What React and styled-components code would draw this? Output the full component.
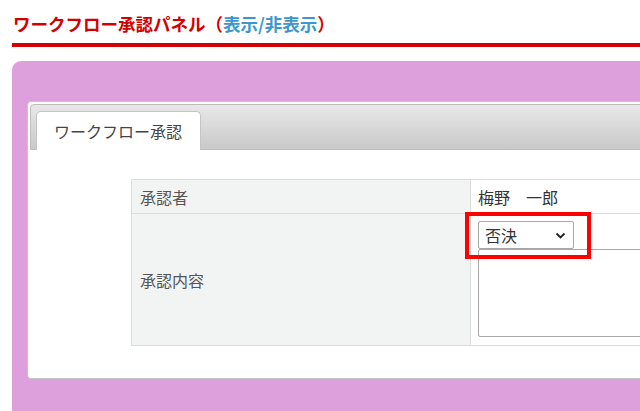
import styled, { createGlobalStyle } from "styled-components";

const GlobalStyle = createGlobalStyle`
  html, body {
    margin: 0;
    padding: 0;
    background: #fff;
    overflow: hidden;
    font-family: "Noto Sans CJK JP", "Noto Sans", sans-serif;
  }
`;

const Page = styled.div`
  width: 760px;
  height: 411px;
  overflow: hidden;
`;

const Header = styled.h2`
  margin: 0 0 0 12px;
  padding: 11px 0 0 1px;
  height: 32px;
  font-size: 17.5px;
  font-weight: bold;
  line-height: 26px;
  color: #d40000;
  border-bottom: 4px solid #d40000;
  box-sizing: content-box;

  span {
    color: #3d97cc;
  }
`;

const Plum = styled.div`
  margin: 14px 0 0 12px;
  padding: 40px 0 33px 15px;
  background: #dda0dd;
  border-top-left-radius: 9px;
`;

const Panel = styled.div`
  background: #fff;
  border: 1px solid #c5c5c5;
  border-radius: 4px;
  padding: 2px;
  padding-bottom: 32px;
`;

const TabBar = styled.div`
  display: flex;
  align-items: flex-end;
  height: 38px;
  padding: 6px 0 0 5px;
  background: linear-gradient(#e8e8e8, #c9c9c9);
  border: 1px solid #bdbdbd;
  border-radius: 4px 4px 0 0;
`;

const Tab = styled.div`
  width: 146px;
  height: 38px;
  margin-bottom: -1px;
  padding-left: 17px;
  background: #fff;
  border: 1px solid #c5c5c5;
  border-bottom: none;
  border-radius: 5px 5px 0 0;
  font-size: 16px;
  line-height: 38px;
  color: #444;
`;

const Table = styled.table`
  width: 840px;
  margin: 29px 0 0 101px;
  table-layout: fixed;
  border-collapse: collapse;
  font-size: 16px;
  color: #444;
`;

const LabelCol = styled.col`
  width: 339px;
`;

const Label = styled.th`
  height: ${({ $h }) => $h}px;
  padding: 0 8px;
  background: #f2f3f3;
  border: 1px solid #dcdcdc;
  font-weight: normal;
  text-align: left;
  color: #555;
`;

const Value = styled.td`
  padding: 0 7px;
  border: 1px solid #dcdcdc;
  vertical-align: ${({ $top }) => ($top ? "top" : "middle")};
  color: #333;
`;

const Stack = styled.div`
  display: flex;
  flex-direction: column;
  padding-top: 7px;
`;

const SelectWrap = styled.div`
  position: relative;
  width: 96px;
`;

const Select = styled.div`
  display: flex;
  align-items: center;
  justify-content: space-between;
  height: 26px;
  padding: 0 5px 0 6px;
  border: 1px solid #a8a8a8;
  border-radius: 2px;
  background: #fff;
  font-size: 16px;
  color: #333;

  svg {
    width: 15px;
    height: 15px;
  }
`;

const Highlight = styled.div`
  position: absolute;
  left: -13px;
  top: -9px;
  width: 118px;
  height: 39px;
  border: 4px solid #ff0000;
  pointer-events: none;
`;

const TextArea = styled.div`
  width: 480px;
  height: 86px;
  border: 1px solid #a8a8a8;
  border-radius: 2px;
`;

export default function App() {
  return (
    <Page>
      <GlobalStyle />
      <Header>
        ワークフロー承認パネル（<span>表示/非表示</span>）
      </Header>
      <Plum>
        <Panel>
          <TabBar>
            <Tab>ワークフロー承認</Tab>
          </TabBar>
          <Table>
            <colgroup>
              <LabelCol />
              <col />
            </colgroup>
            <tbody>
              <tr>
                <Label $h={33}>承認者</Label>
                <Value>梅野　一郎</Value>
              </tr>
              <tr>
                <Label $h={131}>承認内容</Label>
                <Value $top>
                  <Stack>
                    <SelectWrap>
                      <Select>
                        否決
                        <svg viewBox="0 0 15 15">
                          <path
                            d="M3.5 5.5l4 4 4-4"
                            fill="none"
                            stroke="#222"
                            strokeWidth="1.8"
                          />
                        </svg>
                      </Select>
                      <Highlight />
                    </SelectWrap>
                    <TextArea />
                  </Stack>
                </Value>
              </tr>
            </tbody>
          </Table>
        </Panel>
      </Plum>
    </Page>
  );
}
